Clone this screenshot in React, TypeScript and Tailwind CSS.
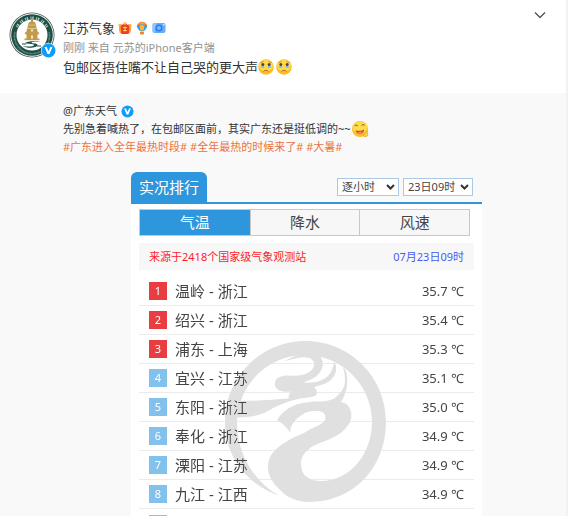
import { useState } from "react";
import type { ReactNode } from "react";

const ranking = [
  { city: "温岭", province: "浙江", value: "35.7" },
  { city: "绍兴", province: "浙江", value: "35.4" },
  { city: "浦东", province: "上海", value: "35.3" },
  { city: "宜兴", province: "江苏", value: "35.1" },
  { city: "东阳", province: "浙江", value: "35.0" },
  { city: "奉化", province: "浙江", value: "34.9" },
  { city: "溧阳", province: "江苏", value: "34.9" },
  { city: "九江", province: "江西", value: "34.9" },
];

const tabs = ["气温", "降水", "风速"];

function VerifiedIcon({ className }: { className: string }) {
  return (
    <svg viewBox="0 0 14 14" className={className} aria-hidden="true">
      <circle cx="7" cy="7" r="7" fill="#fff" />
      <circle cx="7" cy="7" r="6.5" fill="#0f9dfb" />
      <path d="M3.300 3.800h2L7 7.600l1.700-3.800h2L7.900 10.200H6.100z" fill="#fff" />
    </svg>
  );
}

function Avatar() {
  return (
    <svg viewBox="0 0 46 46" className="size-[46px]" aria-hidden="true">
      <circle cx="23" cy="23" r="22.5" fill="#4d5350" />
      <circle cx="23" cy="23" r="21.7" fill="#fff" />
      <circle cx="23" cy="23" r="20.8" fill="#1d5146" />
      <path d="M8 15a17 17 0 0 1 30 0" fill="none" stroke="#dfe7e2" strokeWidth="3" strokeDasharray="1 .8 1.400 2.400" opacity="0.8" />
      <path d="M6 20a17.500 17.500 0 1 0 34 0" fill="none" stroke="#a9beb5" strokeWidth="1.400" strokeDasharray=".8 .6" opacity="0.7" />
      <circle cx="23" cy="23" r="15.5" fill="#fff" />
      <g fill="#c39a4b">
        <path d="M22.300 7h1.400l1 3.500h-3.400z" />
        <path d="M20 10h6l1 3h-8z" />
        <path d="M19 13h8l.6 3.500h-9.200z" />
        <path d="M18 16.500h10l.8 4H17.200z" />
        <path d="M16.500 20h13l.8 2.300H15.700z" />
        <path d="M17.500 22h11v5h-11z" />
        <path d="M15.500 26.500h15v1.700h-15z" />
      </g>
      <path d="M19.500 13h7M18.800 16.500h8.400" stroke="#ead8ae" strokeWidth="0.500" />
      <path d="M22 17.500h2v2h-2zM22 23.500h2v3h-2z" fill="#f5ead0" />
      <path d="M32 29.500c-7-.6-15-.3-15.500 1.500-.3 1.400 8.500.4 8.500 2 0 1.600-6 2-11.500 1.200 5 2.300 14.500 1.900 15-1.200.3-2.200-6-1.300-6-2.300 0-1 5-1 9.500-1.200z" fill="#1d5146" />
      <path d="M13 32h4M28 34h4" stroke="#1d5146" strokeWidth="1" />
    </svg>
  );
}

function CrownBadge() {
  return (
    <svg viewBox="0 0 14 14" className="size-[14px]" aria-hidden="true">
      <path d="M1 5c0-1 2-2 3-1l3-2 3 2c1-1 3 0 3 1l-.8 6.500-2 1.500H3.800l-2-1.500z" fill="#ef3f2a" />
      <path d="M.8 4.500 2.600 5.500 3.200 12.500 1.800 11.500zM13.200 4.500 11.400 5.500 10.800 12.500 12.200 11.500z" fill="#ffa927" />
      <circle cx="7" cy="2.400" r="1.400" fill="#ffc43a" />
      <circle cx="1.800" cy="4.400" r="1.400" fill="#ffb52c" />
      <circle cx="12.200" cy="4.400" r="1.400" fill="#ffb52c" />
      <path d="M5.200 6.500h3.600M7 5.500v5M5.200 9.500h3.600" stroke="#ffd75c" strokeWidth="1" />
    </svg>
  );
}

function BalloonBadge() {
  return (
    <svg viewBox="0 0 14 14" className="size-[14px]" aria-hidden="true">
      <path d="M7 .8a5.200 5.200 0 0 1 5.200 5H1.800A5.200 5.200 0 0 1 7 .8z" fill="#ff7420" />
      <path d="M4.300 2 7 .8 9.700 2v3H4.300z" fill="#ffa12a" />
      <path d="M1.800 4.800 7 3l5.200 1.800C12.200 7 10.500 8.500 9.200 10H4.800C3.500 8.500 1.800 7 1.800 4.800z" fill="#359cf4" />
      <path d="M4.500 5 7 3.500 9.500 5 8.500 9.500h-3z" fill="#ffb833" />
      <rect x="5" y="10.600" width="4" height="2.800" rx="1" fill="#ee8422" />
    </svg>
  );
}

function CameraBadge() {
  return (
    <svg viewBox="0 0 14 12" className="h-3 w-[14px]" aria-hidden="true">
      <rect x="0.500" y="1" width="13" height="10" rx="2" fill="#66aef9" />
      <path d="M.5 3a2 2 0 0 1 2-2h2L2 11a2 2 0 0 1-1.500-2z" fill="#8dc6ff" />
      <circle cx="7" cy="6" r="3.600" fill="#2d7cf0" />
      <circle cx="7" cy="6" r="2" fill="#77bbff" />
      <circle cx="11.800" cy="2.800" r="0.700" fill="#fff" />
    </svg>
  );
}

function SadFace() {
  return (
    <svg viewBox="0 0 16 16" className="size-4" role="img" aria-label="泪">
      <circle cx="8" cy="8" r="7.800" fill="#fbbd2c" />
      <ellipse cx="8" cy="6.500" rx="7" ry="6" fill="#ffd84e" />
      <path d="M2.500 3.800 5.500 2.300M10.500 2.300l3 1.500" stroke="#b9781c" strokeWidth="0.800" />
      <ellipse cx="4.600" cy="6.200" rx="1.800" ry="2" fill="#dfe6e6" />
      <ellipse cx="11.400" cy="6.200" rx="1.800" ry="2" fill="#dfe6e6" />
      <circle cx="4.800" cy="5.500" r="1.500" fill="#6a3c16" />
      <circle cx="11.200" cy="5.500" r="1.500" fill="#6a3c16" />
      <path d="M3.200 7.200h3v1.300h-3zM9.800 7.200h3v1.300h-3z" fill="#4db4ee" />
      <path d="M5.500 12.600c1.300-1.700 3.700-1.700 5 0" fill="none" stroke="#b0601a" strokeWidth="1" />
    </svg>
  );
}

function YumFace() {
  return (
    <svg viewBox="0 0 18 18" className="size-[18px]" role="img" aria-label="馋嘴">
      <circle cx="9" cy="9" r="8" fill="#fbbd2c" />
      <ellipse cx="9" cy="7.300" rx="7.200" ry="6" fill="#ffdc4c" />
      <path d="M3.500 6c.8-1.200 2.500-1.200 3.300 0M10.500 5.500c.8-1.200 2.500-1.200 3.300 0" fill="none" stroke="#8a5514" strokeWidth="1" />
      <path d="M4.500 10.200c3 1 6.500.8 8.500-1 .3 2.500-1.500 4.500-4 4.500s-4-1.500-4.500-3.500z" fill="#d0502f" />
      <path d="M7 12.500c1.300-1 3.400-.8 4.200-.2-.8 1.500-3.400 1.700-4.200.2z" fill="#ff8a6c" />
      <path d="M13 16.500c-1.300-1.700 0-3.200 1.300-3.800l1.500-2.200 1.100.8-.4 2c.9.900.4 2.700-.8 3.200z" fill="#ffc93b" stroke="#e39a1e" strokeWidth="0.500" />
    </svg>
  );
}

function Watermark() {
  return (
    <svg
      viewBox="0 0 162 162"
      className="pointer-events-none absolute left-[86px] top-[71px] size-[162px] mix-blend-darken"
      fill="#e0e0e0"
      aria-hidden="true"
    >
      {/* ring and lower body */}
      <path d="M52 154C20 142 0 114 0 81 0 36 36 0 80.500 0S161 36 161 81s-32 80-77 80c-12 0-23-5-30-13-7-7-11-14-11-22 0-13 9-20 21-27 7-4 14-6 20-10 8-4 14-6 16-10 2-7-3-9-9-9-7 0-10 1-14 4-6 3-12 10-12 18-2-5-8-10-13-13 3-5 7-9 12-12 7-4 13-5 20-6 6-1 11 0 17-1 6-1 8-2 11-5 6-5 8-10 8-16 0-5-1-9-2-13 3 3 4 6 4 10 1 9-1 17-6 25 5 1 8 4 9 7 3 8 1 13-4 19-4 5-10 8-16 11-8 4-16 5-21 10-6 5-8 9-8 15 0 5 2 11 6 13 4 3 8 4 14 4 29 0 51-27 51-59 0-37-30-67-67-67s-68 30-68 68c0 15 4 30 13 45 7 10 17 21 28 27z" />
      {/* head and mane */}
      <path d="M10 59.500c18 1 38-1 54-2-1-2 0-4 2-7-5 1-15 0-16-6-1-8 6-10 13-10 7 1 17 0 22-4 4-3 6-8 2-12-5-5-18-1-28 2 12-8 32-12 37-4 4 7 1 14-5 19-4 3-9 4-13 6 16 1 29-3 31-21 5 7 1 17-7 21-5 3-10 3-13 5 3 2 4 5 2 8-4 2-10 2-16 3-9 2-18 5-26 9-10 7-21 10-38 10z" />
    </svg>
  );
}

function Select({ label, className, children }: { label: string; className: string; children: ReactNode }) {
  return (
    <span className="relative">
      <select
        aria-label={label}
        className={`${className} block h-[18px] appearance-none border border-[#abc9e5] bg-white pl-1 text-[11px] leading-4 text-[#444]`}
      >
        {children}
      </select>
      <svg viewBox="0 0 9 6" className="pointer-events-none absolute right-1 top-[6px] h-[6px] w-[9px]" aria-hidden="true">
        <path d="M1 1l3.500 3.500L8 1" fill="none" stroke="#333" strokeWidth="2" />
      </svg>
    </span>
  );
}

function RankingCard() {
  const [active, setActive] = useState("气温");

  return (
    <section className="ml-[68px] mr-[84px]">
      <div className="flex items-end justify-between border-b-2 border-[#2d96dc]">
        <h2 className="rounded-t-md bg-[#2d96dc] px-2 text-[15px] leading-[30px] text-white">
          实况排行
        </h2>
        <div className="mr-[9px] flex gap-1 pb-[6px]">
          <Select label="统计方式" className="w-[62px]">
            <option>逐小时</option>
          </Select>
          <Select label="时间" className="w-[70px]">
            <option>23日09时</option>
          </Select>
        </div>
      </div>

      <div className="bg-white px-2 pt-[5px]">
        <div className="mr-1 grid grid-cols-3 border border-[#c8c8c8] bg-[#f7f7f7]">
          {tabs.map((tab) => (
            <button
              key={tab}
              onClick={() => setActive(tab)}
              className={
                tab === active
                  ? "h-[25px] bg-[#2d96dc] text-[15px] leading-[25px] text-white"
                  : "h-[25px] border-l border-[#c8c8c8] text-[15px] leading-[25px] text-[#444]"
              }
            >
              {tab}
            </button>
          ))}
        </div>

        <div className="mt-[7px] flex justify-between bg-[#f7f7f7] px-[10px] text-[11px] leading-[27px]">
          <span className="text-[#fb1d2b]">来源于2418个国家级气象观测站</span>
          <span className="text-[#4a5cf0]">07月23日09时</span>
        </div>

        <div className="relative isolate bg-white pt-[7px]">
          <ol>
            {ranking.map((row, i) => (
              <li
                key={row.city}
                className="flex h-[29px] items-center border-b border-[#ebebeb] px-[10px] text-[#444]"
              >
                <span
                  className={
                    i < 3
                      ? "size-[18px] bg-[#e83e41] text-center text-[11px] leading-[18px] text-white"
                      : "size-[18px] bg-[#81c1ec] text-center text-[11px] leading-[18px] text-white"
                  }
                >
                  {i + 1}
                </span>
                <span className="ml-2 text-[15px] leading-5">
                  {row.city} - {row.province}
                </span>
                <span className="ml-auto text-[13px] leading-5">{row.value} ℃</span>
              </li>
            ))}
            {/* next entry, still loading */}
            <li className="flex h-[29px] items-center px-[10px]">
              <span className="size-[18px] bg-[#81c1ec]" />
            </li>
          </ol>
          <Watermark />
        </div>
      </div>
    </section>
  );
}

export default function App() {
  return (
    <main className="h-screen overflow-hidden bg-[#f2f2f2] pr-[2px] font-['Noto_Sans','Noto_Sans_CJK_SC',sans-serif]">
      <article className="bg-white">
        <header className="flex h-[93px] pl-[9px] pt-3">
          <div className="relative size-[46px]">
            <Avatar />
            <VerifiedIcon className="absolute -right-px bottom-0 size-[15px]" />
          </div>
          <div className="ml-2 flex-1 pt-[7px]">
            <div className="flex h-[18px] items-center gap-[3px]">
              <a href="#" className="text-[13px] leading-[18px] text-[#333]">
                江苏气象
              </a>
              <CrownBadge />
              <BalloonBadge />
              <CameraBadge />
            </div>
            <p className="mt-[3px] text-[11px] leading-4 text-[#939393]">
              刚刚 来自 元苏的iPhone客户端
            </p>
            <p className="mt-px flex items-center text-[13px] leading-5 text-[#333]">
              包邮区捂住嘴不让自己哭的更大声
              <span className="flex gap-[2px]">
                <SadFace />
                <SadFace />
              </span>
            </p>
          </div>
          <button aria-label="更多" className="mr-5 flex h-[6px] w-3">
            <svg viewBox="0 0 12 6" className="h-[6px] w-3">
              <path d="M1 .5l5 5 5-5" fill="none" stroke="#555" strokeWidth="1.400" />
            </svg>
          </button>
        </header>

        <div className="bg-[#f9f9f9] pt-[9px]">
          <div className="pl-[63px] text-[11px] leading-[18px] text-[#333]">
            <p className="flex items-center gap-1">
              <a href="#">@广东天气</a>
              <VerifiedIcon className="size-[13px]" />
            </p>
            <p className="flex h-[18px] items-center">
              先别急着喊热了，在包邮区面前，其实广东还是挺低调的~~
              <YumFace />
            </p>
            <p className="text-[#eb7340]">
              <a href="#">#广东进入全年最热时段#</a> <a href="#">#全年最热的时候来了#</a>{" "}
              <a href="#">#大暑#</a>
            </p>
          </div>
          <div className="pl-[63px] pt-4">
            <RankingCard />
          </div>
        </div>
      </article>
    </main>
  );
}
